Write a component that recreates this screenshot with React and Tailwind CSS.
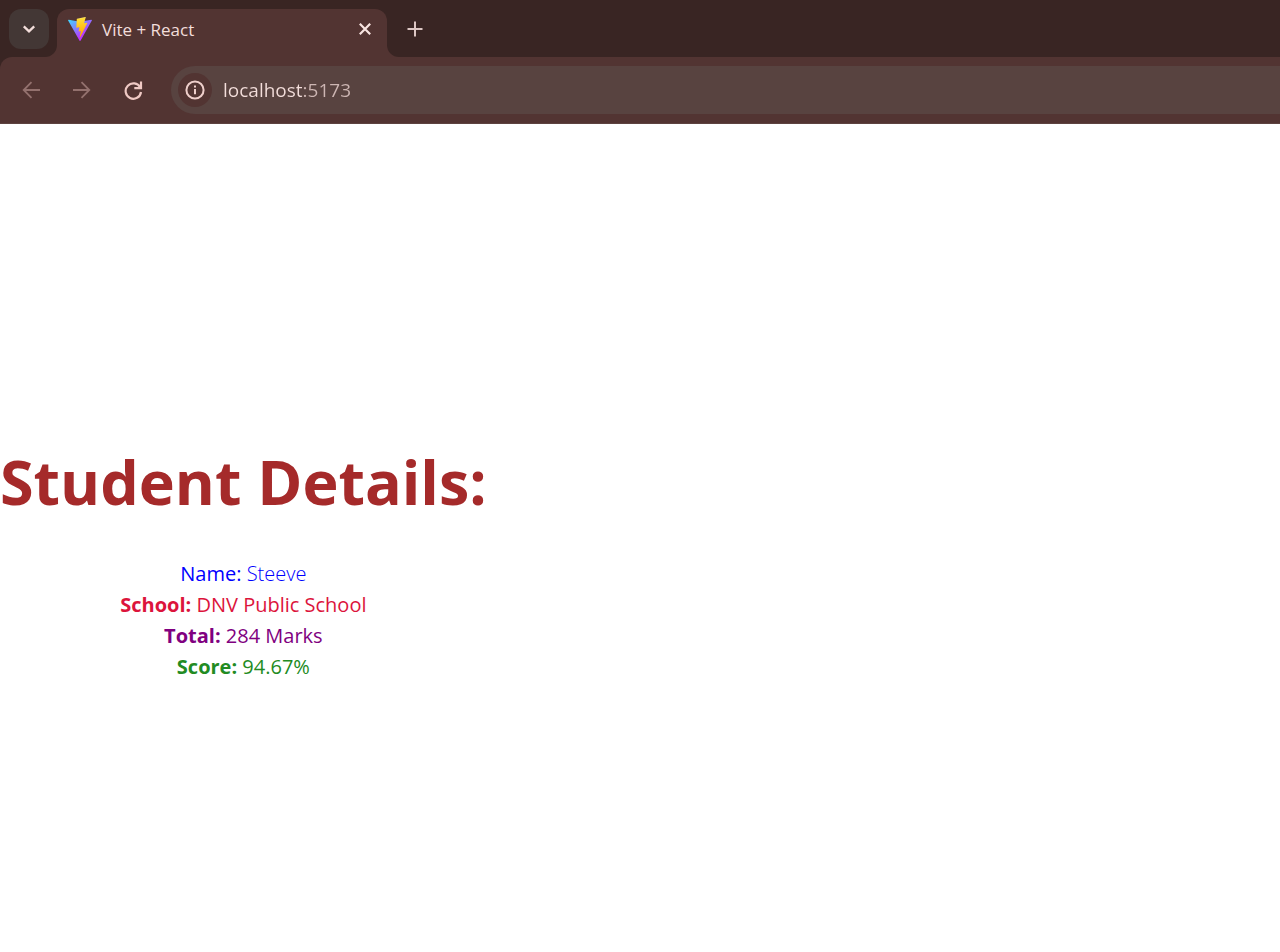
const details = [
  { label: 'Name:', value: 'Steeve', color: 'text-[#0000ff]', labelWeight: 'font-normal', valueWeight: 'font-light' },
  { label: 'School:', value: 'DNV Public School', color: 'text-[#dc143c]', labelWeight: 'font-bold', valueWeight: 'font-normal' },
  { label: 'Total:', value: '284 Marks', color: 'text-[#800080]', labelWeight: 'font-bold', valueWeight: 'font-normal' },
  { label: 'Score:', value: '94.67%', color: 'text-[#228b22]', labelWeight: 'font-bold', valueWeight: 'font-normal' },
];

function Icon({ size, stroke = 2, children }) {
  return (
    <svg width={size} height={size} viewBox="0 0 20 20" fill="none" stroke="currentColor" strokeWidth={stroke} aria-hidden="true">
      {children}
    </svg>
  );
}

function ViteLogo() {
  return (
    <svg className="h-6 w-6 shrink-0" viewBox="0 0 256 257" aria-hidden="true">
      <defs>
        <linearGradient id="vite-body" x1="-.828%" x2="57.636%" y1="7.652%" y2="78.411%">
          <stop offset="0%" stopColor="#41D1FF" />
          <stop offset="100%" stopColor="#BD34FE" />
        </linearGradient>
        <linearGradient id="vite-bolt" x1="43.376%" x2="50.316%" y1="2.242%" y2="89.03%">
          <stop offset="0%" stopColor="#FFEA83" />
          <stop offset="8.333%" stopColor="#FFDD35" />
          <stop offset="100%" stopColor="#FFA800" />
        </linearGradient>
      </defs>
      <path
        fill="url(#vite-body)"
        d="M255.153 37.938L134.897 252.976c-2.483 4.44-8.862 4.466-11.382.048L.875 37.958c-2.746-4.814 1.371-10.646 6.827-9.67l120.385 21.517a6.537 6.537 0 0 0 2.322-.004l117.867-21.483c5.438-.991 9.574 4.796 6.877 9.62Z"
      />
      <path
        fill="url(#vite-bolt)"
        d="M185.432.063L96.44 17.501a3.268 3.268 0 0 0-2.634 3.014l-5.474 92.456a3.268 3.268 0 0 0 3.997 3.378l24.777-5.718c2.318-.535 4.413 1.507 3.936 3.838l-7.361 36.047c-.495 2.426 1.782 4.5 4.151 3.78l15.304-4.649c2.372-.72 4.652 1.36 4.15 3.788l-11.698 56.621c-.732 3.542 3.979 5.473 5.943 2.437l1.313-2.028l72.516-144.72c1.215-2.423-.88-5.186-3.54-4.672l-25.505 4.922c-2.396.462-4.435-1.77-3.759-4.114l16.646-57.705c.677-2.35-1.37-4.583-3.769-4.113Z"
      />
    </svg>
  );
}

function TabStrip() {
  return (
    <div className="flex h-[57px]">
      <div className="bg-[#523432]">
        <div className="h-full rounded-br-xl bg-[#392523] pt-[9px] pr-2 pl-[9px]">
          <button type="button" aria-label="Search tabs" className="flex h-10 w-10 items-center justify-center rounded-xl bg-[#433735] text-[#f3dedb]">
            <Icon size={20} stroke={2.3}>
              <path d="M4.8 7.3 10 12.3l5.2-5" />
            </Icon>
          </button>
        </div>
      </div>
      <div className="flex w-[330px] pt-[9px]">
        <div className="flex w-full items-center rounded-t-xl bg-[#523432] pr-3 pb-[9px] pl-[11px]">
          <ViteLogo />
          <span className="ml-2.5 flex-1 pt-0.5 text-[17px] leading-6 text-[#f3dedb]">Vite + React</span>
          <button type="button" aria-label="Close tab" className="flex h-5 w-5 items-center justify-center text-[#f8e4e1]">
            <Icon size={20} stroke={2.2}>
              <path d="m4.8 4.8 10.4 10.4M15.2 4.8 4.8 15.2" />
            </Icon>
          </button>
        </div>
      </div>
      <div className="flex-1 bg-[#523432]">
        <div className="flex h-full items-center rounded-bl-xl bg-[#392523] pl-[18px]">
          <button type="button" aria-label="New tab" className="text-[#dcc6c3]">
            <Icon size={20}>
              <path d="M10 2.5v15M2.5 10h15" />
            </Icon>
          </button>
        </div>
      </div>
    </div>
  );
}

function Toolbar() {
  return (
    <div className="flex h-[67px] items-center rounded-tl-xl border-b border-[#5d4340] bg-[#523432] pl-[21px]">
      <button type="button" aria-label="Back" className="mr-[31px] text-[#93716e]">
        <Icon size={20} stroke={1.8}>
          <path d="M19 10H3M10.5 2.2 2.7 10l7.8 7.800" />
        </Icon>
      </button>
      <button type="button" aria-label="Forward" className="mr-[31px] text-[#93716e]">
        <Icon size={20} stroke={1.8}>
          <path d="M1 10h16M9.5 2.2 17.3 10l-7.800 7.800" />
        </Icon>
      </button>
      <button type="button" aria-label="Reload" className="mr-7 text-[#efc9c4]">
        <Icon size={20} stroke={2.2}>
          <path d="M18 1.5v6.700h-6.700M17.200 7.500A7.700 7.700 0 1 0 18 12" />
        </Icon>
      </button>
      <div className="flex h-12 flex-1 items-center rounded-l-full bg-[#584340] pl-[7px]">
        <button type="button" aria-label="View site information" className="flex h-[34px] w-[34px] items-center justify-center rounded-full bg-[#523432] text-[#efcfcb]">
          <Icon size={20}>
            <circle cx="10" cy="10" r="8.6" />
            <path d="M10 9v5.3M10 5.500v2" />
          </Icon>
        </button>
        <input
          type="text"
          aria-label="Address"
          defaultValue="localhost:5173"
          className="ml-[11px] min-w-0 flex-1 bg-[linear-gradient(to_right,#f3dedb_79px,#cdb6b3_79px)] bg-clip-text text-[19px] leading-7 text-transparent caret-white outline-none"
        />
      </div>
    </div>
  );
}

export default function App() {
  return (
    <div className="flex min-h-screen flex-col bg-white font-['Open_Sans','Noto_Sans',sans-serif]">
      <header className="bg-[#392523]">
        <TabStrip />
        <Toolbar />
      </header>
      <main className="flex flex-1 items-center">
        <div className="pt-[52px] text-center">
          <h1 className="mb-10 text-[61px] leading-[72px] font-bold text-[#a52a2a]">Student Details:</h1>
          {details.map(({ label, value, color, labelWeight, valueWeight }) => (
            <p key={label} className={`text-xl leading-[31px] ${color} ${valueWeight}`}>
              <span className={labelWeight}>{label}</span> {value}
            </p>
          ))}
        </div>
      </main>
    </div>
  );
}
